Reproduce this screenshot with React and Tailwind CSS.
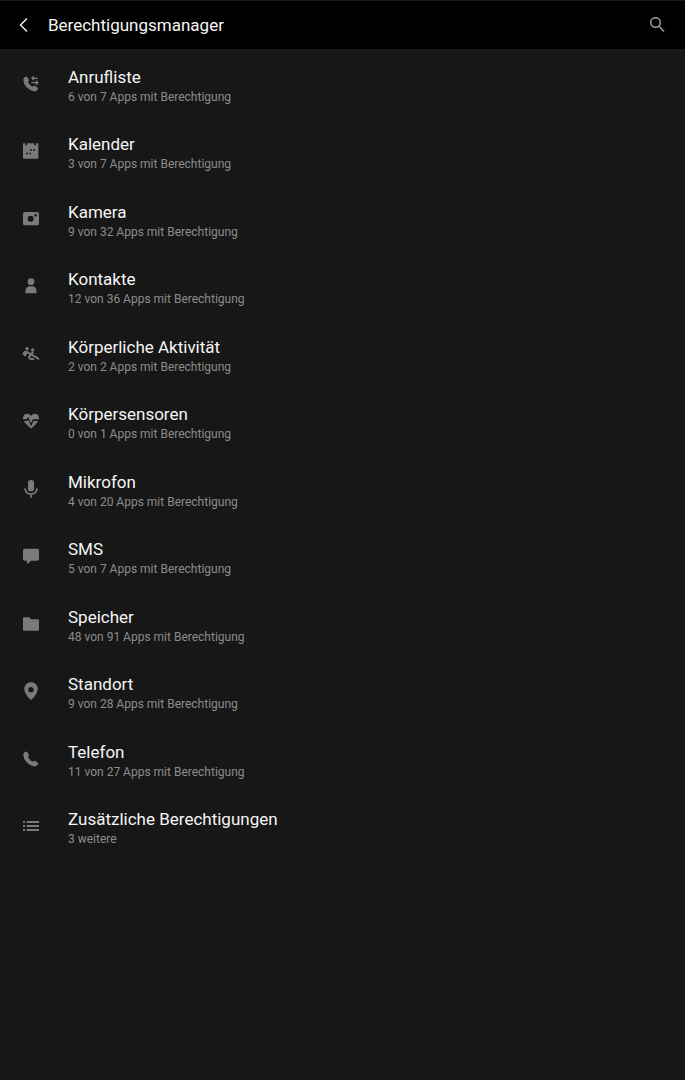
const PERMISSIONS = [
  { icon: 'calls', title: 'Anrufliste', summary: '6 von 7 Apps mit Berechtigung' },
  { icon: 'calendar', title: 'Kalender', summary: '3 von 7 Apps mit Berechtigung' },
  { icon: 'camera', title: 'Kamera', summary: '9 von 32 Apps mit Berechtigung' },
  { icon: 'contacts', title: 'Kontakte', summary: '12 von 36 Apps mit Berechtigung' },
  { icon: 'activity', title: 'Körperliche Aktivität', summary: '2 von 2 Apps mit Berechtigung' },
  { icon: 'heart', title: 'Körpersensoren', summary: '0 von 1 Apps mit Berechtigung' },
  { icon: 'mic', title: 'Mikrofon', summary: '4 von 20 Apps mit Berechtigung' },
  { icon: 'sms', title: 'SMS', summary: '5 von 7 Apps mit Berechtigung' },
  { icon: 'folder', title: 'Speicher', summary: '48 von 91 Apps mit Berechtigung' },
  { icon: 'location', title: 'Standort', summary: '9 von 28 Apps mit Berechtigung' },
  { icon: 'phone', title: 'Telefon', summary: '11 von 27 Apps mit Berechtigung' },
  { icon: 'list', title: 'Zusätzliche Berechtigungen', summary: '3 weitere' },
];

const HANDSET =
  'M2 7 Q6 1 10 2 Q13 2 16 8 Q19 13 17 16 L15 19 Q20 27 28 32 L31 30 Q34 28 38 31 L43 34 Q47 37 44 41 Q39 47 32 46 Q22 45 11 34 Q1 23 1 13 Q1 9 2 7 Z';

const ICONS = {
  calls: (
    <>
      <path d={HANDSET} />
      <path
        d="M44 7H28M33 1l-6 6 6 6M25 20h18M39 14l6 6-6 6"
        fill="none"
        stroke="currentColor"
        strokeWidth="4"
      />
    </>
  ),
  calendar: (
    <path
      fillRule="evenodd"
      d="M2 1h5v6h6V1h20v6h6V1h5q2 0 2 2v42q0 2-2 2H2q-2 0-2-2V3q0-2 2-2ZM21 19v5h5v-5ZM31 19v5h5v-5ZM9 29v5h5v-5ZM19 29v5h5v-5Z"
    />
  ),
  camera: (
    <path
      fillRule="evenodd"
      d="M5 3h38q5 0 5 5v30q0 5-5 5H5q-5 0-5-5V8q0-5 5-5ZM23 14a9 9 0 1 0 0 18 9 9 0 0 0 0-18ZM38 9a4 4 0 1 0 0 8 4 4 0 0 0 0-8Z"
    />
  ),
  contacts: (
    <>
      <circle cx="24" cy="11" r="10" />
      <path d="M7 43Q7 25 20 25h8q13 0 13 18 0 3-3 3H10q-3 0-3-3Z" />
    </>
  ),
  activity: (
    <>
      <circle cx="12" cy="8" r="5" />
      <circle cx="29" cy="12" r="5" />
      <path
        d="M2 24Q3 17 10 17L22 24L46 38M24 25L18 33L21 38L31 40M12 18L6 28M22 24L29 21"
        fill="none"
        stroke="currentColor"
        strokeWidth="6"
        strokeLinecap="round"
        strokeLinejoin="round"
      />
    </>
  ),
  heart: (
    <>
      <path d="M24 8Q19 2 12 2Q0 3 0 16v3h11l5-7 8 19 6-12h18v-3Q48 3 36 2q-7 0-12 6Z" />
      <path d="M3 24h10l3-4 8 20 8-16h13q-3 7-11 14L26 45q-2 2-4 0L13 37Q5 30 3 24Z" />
    </>
  ),
  mic: (
    <>
      <rect x="15" y="-3" width="18" height="34" rx="8" />
      <path
        d="M6 22Q7 39 24 39Q41 39 42 22M24 39v11"
        fill="none"
        stroke="currentColor"
        strokeWidth="5"
      />
    </>
  ),
  sms: <path d="M5 2h38q5 0 5 5v26q0 5-5 5H24L14 48q-2 1-2-2v-8H5q-5 0-5-5V7q0-5 5-5Z" />,
  folder: <path d="M3 4h15q2 0 3 2l2 4h22q3 0 3 3v28q0 3-3 3H3q-3 0-3-3V7q0-3 3-3Z" />,
  location: (
    <path
      fillRule="evenodd"
      d="M24-2Q34-2 40 5q5 7 4 15-2 13-17 29-3 3-6 0Q6 33 4 20 3 12 8 5q6-7 16-7ZM24 12a8 8 0 1 0 0 16 8 8 0 0 0 0-16Z"
    />
  ),
  phone: <path d={HANDSET} />,
  list: (
    <path d="M0 9h6v6H0ZM0 21h6v6H0ZM0 33h6v6H0ZM11 9h37v6H11ZM11 21h37v6H11ZM11 33h37v6H11Z" />
  ),
};

function PermissionIcon({ name }) {
  return (
    <svg
      viewBox="-3 -3 54 54"
      fill="currentColor"
      aria-hidden="true"
      className="mb-1 size-[18px] shrink-0 text-[#7a7a7a]"
    >
      {ICONS[name]}
    </svg>
  );
}

function PermissionRow({ icon, title, summary }) {
  return (
    <li className="flex">
      <a href={`#${icon}`} className="flex w-full items-center px-[22px] hover:bg-white/5">
        <PermissionIcon name={icon} />
        <span className="ml-7 flex flex-col">
          <span className="text-[17px] leading-[22px] text-[#f5f5f5]">{title}</span>
          <span className="text-[12px] leading-[18px] text-[#8c8c8c]">{summary}</span>
        </span>
      </a>
    </li>
  );
}

export default function App() {
  return (
    <div className="min-h-screen bg-[#171717] font-['Roboto',sans-serif]">
      <header className="flex h-[49px] items-center border-t border-[#171717] bg-black px-4">
        <button type="button" aria-label="Zurück" className="flex size-4 items-center justify-center">
          <svg viewBox="0 0 16 16" className="size-4" fill="none" stroke="#f5f5f5" strokeWidth="1.4">
            <path d="M11 1.5L4.5 8L11 14.5" />
          </svg>
        </button>
        <h1 className="ml-4 flex-1 text-[17px] leading-6 text-[#f5f5f5]">Berechtigungsmanager</h1>
        <button type="button" aria-label="Suchen" className="mr-1 flex size-4 items-center justify-center">
          <svg viewBox="0 0 16 16" className="size-4" fill="none" stroke="#9a9a9a" strokeWidth="1.5">
            <circle cx="6.5" cy="5.5" r="4.8" />
            <path d="M10 9L15 14.5" />
          </svg>
        </button>
      </header>

      <main className="pt-[3px]">
        <ul className="grid min-h-[75vh] auto-rows-fr">
          {PERMISSIONS.map((permission) => (
            <PermissionRow key={permission.icon} {...permission} />
          ))}
        </ul>
      </main>
    </div>
  );
}
